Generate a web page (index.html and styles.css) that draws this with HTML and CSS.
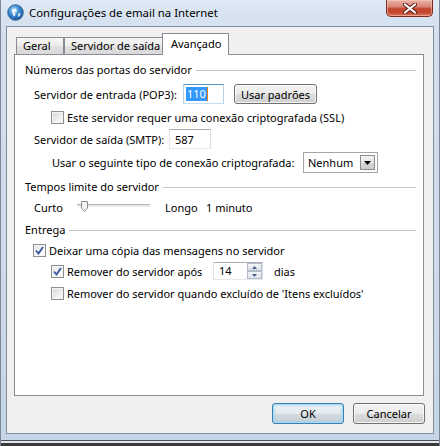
FILE: index.html
```html
<!DOCTYPE html>
<html lang="pt">
<head>
<meta charset="utf-8">
<title>Configurações de email na Internet</title>
<link rel="stylesheet" href="styles.css">
</head>
<body>
<div class="window">
  <div class="titlebar">
    <svg class="app-icon" width="17" height="17" viewBox="0 0 17 17">
      <defs>
        <radialGradient id="gl" cx="0.4" cy="0.35" r="0.7">
          <stop offset="0" stop-color="#bfe3fb"/>
          <stop offset="0.45" stop-color="#3d8fd6"/>
          <stop offset="1" stop-color="#1a4f94"/>
        </radialGradient>
      </defs>
      <circle cx="8.5" cy="8.5" r="7.8" fill="url(#gl)" stroke="#2a5a8c" stroke-width="0.8"/>
      <path d="M5 5.5 L9 4.5 L10 7 L8 8 L8.5 11 L6.5 12.5 L5.5 9 Z" fill="#ffffff" opacity="0.85"/>
      <path d="M11 9.5 L13.5 9 L13 12 L11 13 Z" fill="#e8f2fb" opacity="0.8"/>
    </svg>
    <span class="title">Configurações de email na Internet</span>
    <div class="close">
      <svg width="14" height="11" viewBox="0 0 14 11">
        <path d="M2 1.5 L12 9.5 M12 1.5 L2 9.5" stroke="#5a1a12" stroke-width="4" stroke-linecap="round"/>
        <path d="M2 1.5 L12 9.5 M12 1.5 L2 9.5" stroke="#ffffff" stroke-width="2.2" stroke-linecap="round"/>
      </svg>
    </div>
  </div>

  <div class="client">
    <div class="tabs">
      <div class="tab tab-geral">Geral</div>
      <div class="tab tab-saida">Servidor de saída</div>
      <div class="tab tab-active">Avançado</div>
    </div>

    <div class="panel">
      <div class="group-title"><span>Números das portas do servidor</span></div>

      <div class="row row-pop ind-label">
        <span class="lbl lbl-pop">Servidor de entrada (POP3):</span>
        <div class="textbox focused tb-pop"><span class="sel">110</span><span class="caret"></span></div>
        <div class="btn btn-defaults">Usar padrões</div>
      </div>

      <div class="row row-ssl ind-check">
        <span class="check"></span>
        <span>Este servidor requer uma conexão criptografada (SSL)</span>
      </div>

      <div class="row row-smtp ind-label">
        <span class="lbl lbl-smtp">Servidor de saída (SMTP):</span>
        <div class="textbox tb-smtp"><span class="val">587</span></div>
      </div>

      <div class="row row-enc ind-enc">
        <span class="lbl lbl-enc">Usar o seguinte tipo de conexão criptografada:</span>
        <div class="select">
          <span class="val">Nenhum</span>
          <span class="drop">
            <svg width="7" height="4" viewBox="0 0 7 4"><path d="M0 0 H7 L3.5 4 Z" fill="#000"/></svg>
          </span>
        </div>
      </div>

      <div class="group-title gt-tempos"><span>Tempos limite do servidor</span></div>

      <div class="row row-timeout ind-label">
        <span class="lbl lbl-curto">Curto</span>
        <div class="slider">
          <div class="track"></div>
          <svg class="thumb" width="7" height="11" viewBox="0 0 7 11">
            <path d="M0.5 0.5 H6.5 V7 L3.5 10.5 L0.5 7 Z" fill="#f4f4f4" stroke="#8a8a8a"/>
          </svg>
        </div>
        <span class="lbl lbl-longo">Longo</span>
        <span>1 minuto</span>
      </div>

      <div class="group-title gt-entrega"><span>Entrega</span></div>

      <div class="row row-deixar ind-check0">
        <span class="check checked">
          <svg width="9" height="9" viewBox="0 0 9 9"><path d="M1 4.5 L3.5 7.5 L8 1" fill="none" stroke="#3556a0" stroke-width="1.8"/></svg>
        </span>
        <span>Deixar uma cópia das mensagens no servidor</span>
      </div>

      <div class="row row-apos ind-check">
        <span class="check checked">
          <svg width="9" height="9" viewBox="0 0 9 9"><path d="M1 4.5 L3.5 7.5 L8 1" fill="none" stroke="#3556a0" stroke-width="1.8"/></svg>
        </span>
        <span class="lbl lbl-apos">Remover do servidor após</span>
        <div class="spin">
          <span class="val">14</span>
          <span class="spin-btns">
            <span class="sb"><svg width="5" height="3" viewBox="0 0 5 3"><path d="M0 3 H5 L2.5 0 Z" fill="#4d6185"/></svg></span>
            <span class="sb"><svg width="5" height="3" viewBox="0 0 5 3"><path d="M0 0 H5 L2.5 3 Z" fill="#4d6185"/></svg></span>
          </span>
        </div>
        <span class="dias">dias</span>
      </div>

      <div class="row row-quando ind-check">
        <span class="check"></span>
        <span>Remover do servidor quando excluído de 'Itens excluídos'</span>
      </div>
    </div>

    <div class="buttons">
      <div class="btn btn-ok">OK</div>
      <div class="btn btn-cancel">Cancelar</div>
    </div>
  </div>
  <div class="frame-bottom"></div>
</div>
</body>
</html>
```

FILE: styles.css
```css
html, body {
  margin: 0;
  padding: 0;
}
body {
  font-family: "Noto Sans", "Open Sans", sans-serif;
  font-size: 11px;
  color: #000;
  background: #2c2c2c;
}
.window {
  width: 440px;
  height: 446px;
  display: flex;
  flex-direction: column;
  box-sizing: border-box;
  background: linear-gradient(to bottom, #dfe9f5 0px, #d3e0ee 26px, #cbd9e8 300px, #c6d5e6 446px);
  border-left: 1px solid #7d8896;
  border-right: 1px solid #7d8896;
}
.titlebar {
  height: 26px;
  display: flex;
  align-items: flex-start;
  flex-shrink: 0;
}
.app-icon {
  margin: 4px 5px 0 6px;
  flex-shrink: 0;
}
.title {
  margin-top: 5px;
  line-height: 16px;
  font-size: 11.4px;
  color: #000;
}
.close {
  margin-left: auto;
  margin-right: 6px;
  width: 47px;
  height: 17px;
  box-sizing: border-box;
  border: 1px solid #7a2a1e;
  border-top: none;
  border-radius: 0 0 5px 5px;
  background: linear-gradient(to bottom, #eab1a4 0%, #d98a7a 40%, #c4462f 55%, #c64a31 80%, #dc7a5a 100%);
  box-shadow: inset 0 0 0 1px rgba(255, 210, 200, 0.5);
  display: flex;
  align-items: center;
  justify-content: center;
}
.client {
  flex: 1;
  margin: 0 5px;
  border: 1px solid #7f8ea0;
  background: #f0f0f0;
  padding: 6px 9px 9px 7px;
  display: flex;
  flex-direction: column;
  min-height: 0;
}
.tabs {
  height: 21px;
  display: flex;
  align-items: flex-end;
  padding-left: 2px;
  flex-shrink: 0;
}
.tab {
  box-sizing: border-box;
  height: 17px;
  border: 1px solid #898c95;
  border-bottom: none;
  background: linear-gradient(to bottom, #f6f6f6 0%, #ececec 50%, #e1e1e1 51%, #d9d9d9 100%);
  line-height: 16px;
  padding-left: 6px;
  white-space: nowrap;
}
.tab-geral { width: 48px; }
.tab-saida { width: 99px; }
.tab-active {
  width: 67px;
  height: 22px;
  margin-left: -1px;
  margin-bottom: -1px;
  background: #fff;
  position: relative;
  z-index: 1;
  line-height: 19px;
  padding-left: 8px;
}
.panel {
  flex: 1;
  border: 1px solid #898c95;
  background: #fff;
  padding: 8px 7px 0 10px;
  min-height: 0;
}
.group-title {
  display: flex;
  align-items: center;
  height: 14px;
  line-height: 14px;
}
.group-title::after {
  content: "";
  flex: 1;
  height: 1px;
  background: #c3c7cc;
  margin-left: 4px;
}
.gt-tempos { margin-top: 7px; }
.gt-entrega { margin-top: 9px; }
.row {
  display: flex;
  align-items: center;
  white-space: nowrap;
}
.ind-label { padding-left: 9px; }
.ind-check { padding-left: 26px; }
.ind-check0 { padding-left: 8px; }
.ind-enc { padding-left: 27px; }
.lbl { flex-shrink: 0; display: inline-block; }
.lbl-pop { width: 149px; }
.lbl-smtp { width: 135px; }
.lbl-enc { width: 251px; }
.lbl-curto { width: 43px; }
.lbl-longo { width: 41px; }
.lbl-apos { width: 146px; }

.row-pop { margin-top: 7px; height: 20px; }
.row-ssl { margin-top: 7px; height: 13px; }
.row-smtp { margin-top: 5px; height: 20px; }
.row-enc { margin-top: 3px; height: 21px; }
.row-timeout { margin-top: 6px; height: 14px; }
.row-deixar { margin-top: 7px; height: 13px; }
.row-apos { margin-top: 5px; height: 18px; }
.row-quando { margin-top: 7px; height: 13px; }

.textbox {
  box-sizing: border-box;
  height: 20px;
  border: 1px solid;
  border-color: #abadb3 #dbdfe6 #e3e9ef #e2e3ea;
  background: #fff;
  display: flex;
  align-items: center;
}
.textbox.focused {
  border-color: #5a94c4 #b5d3ea #c5dff0 #b5d3ea;
}
.tb-pop { width: 41px; }
.tb-smtp { width: 42px; padding-left: 5px; }
.sel {
  margin-left: 2px;
  background: #3399ff;
  color: #fff;
  line-height: 14px;
  padding: 0 1px;
}
.caret {
  width: 1px;
  height: 14px;
  background: #e07a10;
}
.btn {
  box-sizing: border-box;
  border: 1px solid #707070;
  border-radius: 3px;
  background: linear-gradient(to bottom, #f2f2f2 0%, #ebebeb 50%, #dddddd 51%, #cfcfcf 100%);
  box-shadow: inset 0 0 0 1px rgba(255, 255, 255, 0.75);
  display: flex;
  align-items: center;
  justify-content: center;
  white-space: nowrap;
}
.btn-defaults {
  width: 83px;
  height: 20px;
  margin-left: 10px;
}
.check {
  box-sizing: border-box;
  width: 13px;
  height: 13px;
  border: 1px solid #8e8f8f;
  background: linear-gradient(135deg, #d9d9d9 0%, #f0f0f0 60%, #ffffff 100%);
  box-shadow: inset 0 0 0 1px #f4f4f4;
  margin-right: 3px;
  flex-shrink: 0;
  display: flex;
  align-items: center;
  justify-content: center;
}
.check.checked {
  background: linear-gradient(135deg, #e4e4e4 0%, #f6f6f6 60%, #ffffff 100%);
}
.select {
  box-sizing: border-box;
  width: 75px;
  height: 21px;
  border: 1px solid #a5a5a5;
  background: #fff;
  display: flex;
  align-items: center;
  padding: 0 2px 0 4px;
}
.select .val { flex: 1; }
.drop {
  box-sizing: border-box;
  width: 15px;
  height: 15px;
  border: 1px solid #8d8d8d;
  background: linear-gradient(to bottom, #f2f2f2 0%, #e6e6e6 50%, #d6d6d6 51%, #cdcdcd 100%);
  display: flex;
  align-items: center;
  justify-content: center;
}
.slider {
  position: relative;
  width: 73px;
  height: 14px;
  margin-right: 15px;
  flex-shrink: 0;
}
.track {
  position: absolute;
  left: 0;
  right: 0;
  top: 4px;
  height: 2px;
  border-top: 1px solid #b4b4b4;
  border-bottom: 1px solid #ffffff;
  background: #e7eaea;
}
.thumb {
  position: absolute;
  left: 4px;
  top: 1px;
}
.spin {
  box-sizing: border-box;
  width: 50px;
  height: 18px;
  border: 1px solid;
  border-color: #abadb3 #dbdfe6 #e3e9ef #e2e3ea;
  background: #fff;
  display: flex;
  align-items: center;
}
.spin .val {
  flex: 1;
  padding-left: 5px;
  line-height: 14px;
}
.spin-btns {
  width: 15px;
  height: 16px;
  display: flex;
  flex-direction: column;
}
.sb {
  flex: 1;
  box-sizing: border-box;
  border: 1px solid #b2bccb;
  background: linear-gradient(to bottom, #f3f5f9, #dde3ec);
  display: flex;
  align-items: center;
  justify-content: center;
}
.dias { margin-left: 11px; }
.buttons {
  flex-shrink: 0;
  display: flex;
  justify-content: flex-end;
  gap: 9px;
  margin-top: 7px;
  margin-right: -1px;
  height: 21px;
}
.btn-ok, .btn-cancel {
  width: 72px;
  height: 21px;
}
.btn-ok {
  border-color: #3c7fb1;
  box-shadow: inset 0 0 0 1px #a5d9f5, inset 0 0 2px 2px rgba(120, 200, 240, 0.35);
  background: linear-gradient(to bottom, #eef3f6 0%, #e3e9ed 50%, #d3dbe0 51%, #c7d1d7 100%);
}
.frame-bottom {
  height: 12px;
  flex-shrink: 0;
  background: linear-gradient(to bottom, #c6d5e6 0px, #c6d5e6 6px, #4a5563 6px, #4a5563 7px, #e6e6e6 7px, #e6e6e6 9px, #3a3a3a 9px);
}
```
